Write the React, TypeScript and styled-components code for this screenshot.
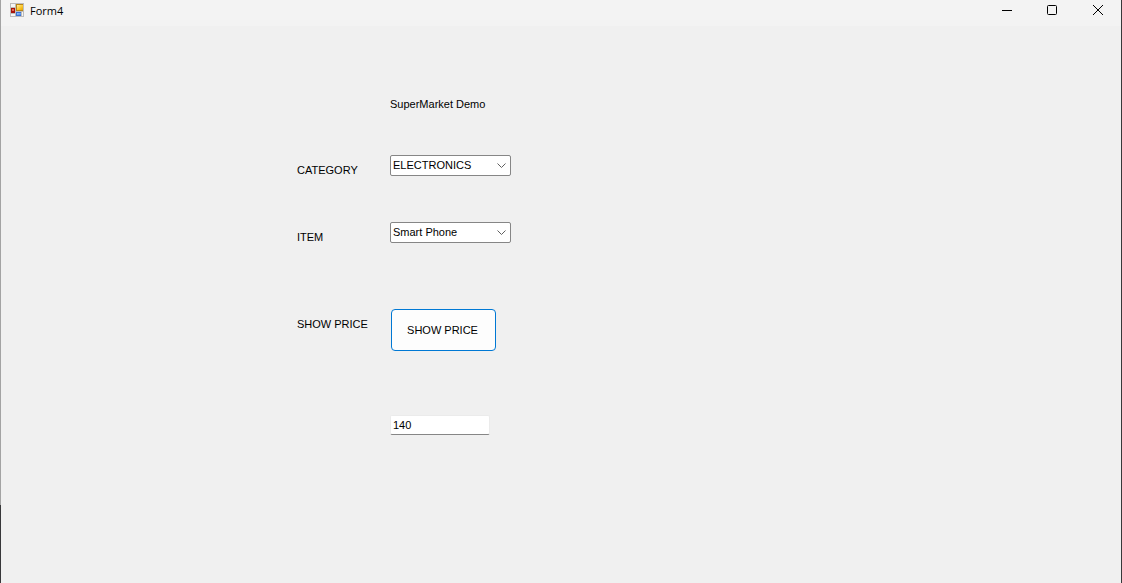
import React, { useState } from "react";
import styled, { createGlobalStyle } from "styled-components";

const GlobalStyle = createGlobalStyle`
  *, *::before, *::after { box-sizing: border-box; }
  body { margin: 0; background: #f0f0f0; }
`;

const formFont = `11px/16px "Liberation Sans", sans-serif`;

const WindowFrame = styled.div`
  display: flex;
  flex-direction: column;
  min-height: 100vh;
  padding: 0 1px;
  background: linear-gradient(to right, transparent 50%, #38383a 50%),
    linear-gradient(#a3a3a3 0 505px, #38383a 505px);
`;

const TitleBar = styled.header`
  display: flex;
  align-items: center;
  height: 26px;
  padding-left: 8px;
  background: #f3f3f3;
`;

const AppIcon = styled.svg`
  width: 16px;
  height: 16px;
  margin-bottom: 6px;
`;

const WindowTitle = styled.h1`
  flex: 1;
  margin: 0 0 4px 5px;
  color: #000;
  font: 400 11px/16px "Open Sans", "Noto Sans", sans-serif;
`;

const CaptionButton = styled.button`
  display: flex;
  align-items: center;
  justify-content: center;
  width: 46px;
  height: 26px;
  padding: 0 0 6px;
  border: 0;
  background: transparent;
`;

const FormBody = styled.main`
  flex: 1;
  padding: 70px 24px 24px 296px;
  background: #f0f0f0;
  color: #000;
  font: ${formFont};
`;

const Row = styled.div<{ $gap: number }>`
  display: grid;
  grid-template-columns: 93px auto;
  justify-content: start;
  align-items: start;
  margin-top: ${(p) => p.$gap}px;
`;

const Heading = styled.h2`
  grid-column: 2;
  margin: 0;
  font: inherit;
`;

const FieldLabel = styled.label`
  padding-top: 7px;
`;

const SelectBox = styled.div`
  display: grid;
  align-items: center;
  width: 121px;

  > * { grid-area: 1 / 1; }
`;

const Select = styled.select`
  appearance: none;
  width: 100%;
  height: 21px;
  padding: 0 20px 2px 2px;
  border: 1px solid #868686;
  border-radius: 2px;
  background: #fff;
  color: #000;
  font: ${formFont};
`;

const Chevron = styled.svg`
  justify-self: end;
  width: 9px;
  height: 5px;
  margin-right: 5px;
  pointer-events: none;
`;

const PriceButton = styled.button`
  width: 105px;
  height: 42px;
  margin-left: 1px;
  padding: 0 2px 0 0;
  border: 1px solid #0078d4;
  border-radius: 4px;
  background: #fdfdfd;
  color: #000;
  font: ${formFont};
`;

const PriceInput = styled.input`
  grid-column: 2;
  width: 100px;
  height: 20px;
  padding: 0 2px;
  border: 1px solid #ebebeb;
  border-bottom-color: #868686;
  border-radius: 2px;
  background: #fff;
  color: #000;
  font: ${formFont};
`;

const catalogue: Record<string, Record<string, string>> = {
  ELECTRONICS: { "Smart Phone": "140" },
};

type DropDownProps = {
  id: string;
  value: string;
  options: string[];
  onChange: (value: string) => void;
};

function DropDown({ id, value, options, onChange }: DropDownProps) {
  return (
    <SelectBox>
      <Select id={id} value={value} onChange={(e) => onChange(e.target.value)}>
        {options.map((option) => (
          <option key={option}>{option}</option>
        ))}
      </Select>
      <Chevron viewBox="0 0 9 5" fill="none" stroke="#606060" aria-hidden="true">
        <path d="M0.5 0.5 4.5 4.5 8.5 0.5" />
      </Chevron>
    </SelectBox>
  );
}

export default function App() {
  const [category, setCategory] = useState("ELECTRONICS");
  const [item, setItem] = useState("Smart Phone");
  const [price, setPrice] = useState("140");

  return (
    <>
      <GlobalStyle />
      <WindowFrame>
        <TitleBar>
          <AppIcon viewBox="0 0 16 16" aria-hidden="true">
            <defs>
              <linearGradient id="gold" x1="0" y1="0" x2="1" y2="1">
                <stop offset="0" stopColor="#fff0a0" />
                <stop offset="0.5" stopColor="#fccb35" />
                <stop offset="1" stopColor="#e5a400" />
              </linearGradient>
              <linearGradient id="blue" x1="0" y1="0" x2="1" y2="1">
                <stop offset="0" stopColor="#9cc8ff" />
                <stop offset="1" stopColor="#3f7fe0" />
              </linearGradient>
            </defs>
            <path d="M1 1h14v14H1z" fill="#bcbcbc" />
            <path d="M2 2h4v3H2zM2 12h4v2H2zM13 10h1v4h-1z" fill="#f6f6f6" />
            <path d="M2 6h4v5H2z" fill="#a91409" />
            <path d="M3 7h2v2H3z" fill="#e2695a" />
            <path d="M7 2h7v7H7z" fill="#b98617" />
            <path d="M8 3h6v5H8z" fill="url(#gold)" />
            <path d="M7 10h5v4H7z" fill="#3c6fd0" />
            <path d="M8 11h4v2H8z" fill="url(#blue)" />
          </AppIcon>
          <WindowTitle>Form4</WindowTitle>
          <CaptionButton type="button" aria-label="Minimize">
            <svg width="12" height="10" viewBox="0 0 12 10" stroke="#000">
              <path d="M2 5.5h10" />
            </svg>
          </CaptionButton>
          <CaptionButton type="button" aria-label="Maximize">
            <svg width="10" height="10" viewBox="0 0 10 10" fill="none" stroke="#000">
              <rect x="0.5" y="0.5" width="9" height="9" rx="1" />
            </svg>
          </CaptionButton>
          <CaptionButton type="button" aria-label="Close">
            <svg width="10" height="10" viewBox="0 0 10 10" stroke="#000">
              <path d="M0 0 10 10M10 0 0 10" />
            </svg>
          </CaptionButton>
        </TitleBar>
        <FormBody>
          <Row $gap={0}>
            <Heading>SuperMarket Demo</Heading>
          </Row>
          <Row $gap={43}>
            <FieldLabel htmlFor="category">CATEGORY</FieldLabel>
            <DropDown
              id="category"
              value={category}
              options={Object.keys(catalogue)}
              onChange={setCategory}
            />
          </Row>
          <Row $gap={44}>
            <FieldLabel htmlFor="item">ITEM</FieldLabel>
            <DropDown
              id="item"
              value={item}
              options={Object.keys(catalogue[category])}
              onChange={setItem}
            />
          </Row>
          <Row $gap={64}>
            <FieldLabel htmlFor="show-price">SHOW PRICE</FieldLabel>
            <PriceButton
              id="show-price"
              type="button"
              onClick={() => setPrice(catalogue[category][item])}
            >
              SHOW PRICE
            </PriceButton>
          </Row>
          <Row $gap={64}>
            <PriceInput
              aria-label="Price"
              value={price}
              onChange={(e) => setPrice(e.target.value)}
            />
          </Row>
        </FormBody>
      </WindowFrame>
    </>
  );
}
